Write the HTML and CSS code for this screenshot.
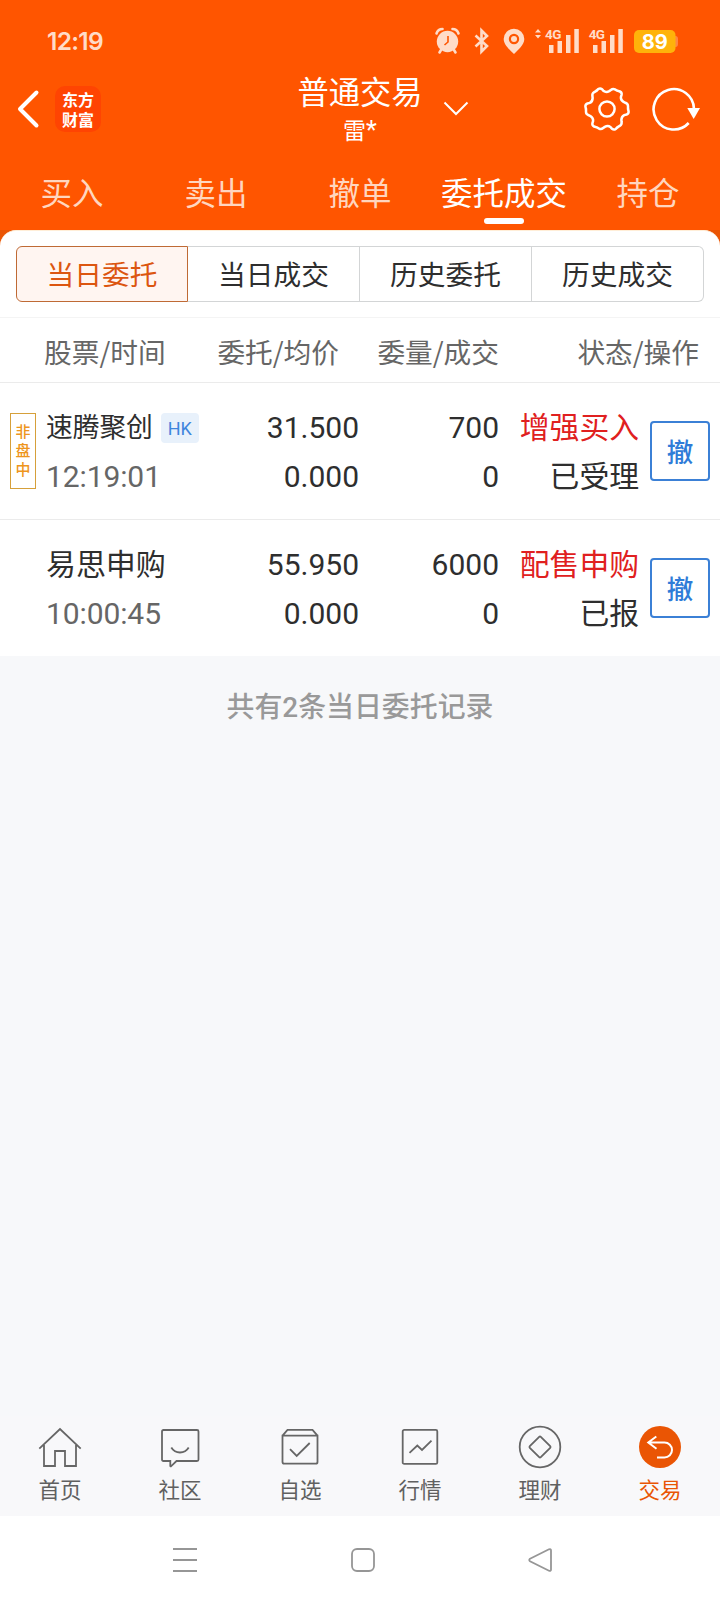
FILE: index.html
```html
<!DOCTYPE html>
<html lang="zh-CN">
<head>
<meta charset="utf-8">
<title>普通交易</title>
<link rel="stylesheet" href="styles.css">
</head>
<body>
<div class="app">
  <header class="header">
    <div class="status">
      <span class="clock">12:19</span>
      <svg class="status-icons" width="250" height="34" viewBox="430 24 250 34" fill="#ffdcc8">
        <circle cx="447.5" cy="41.5" r="10.7"/>
        <path d="M436.5 33.5q1.500-4.500 6-4.500M458.500 33.500q-1.500-4.500-6-4.500M441 50l-1.500 2.500M454 50l1.500 2.500" stroke="#ffdcc8" stroke-width="2.600" fill="none" stroke-linecap="round"/>
        <path d="M448 36v6l-3.500 3" stroke="#ff5500" stroke-width="1.600" fill="none"/>
        <path d="M475.500 35.500l11.500 10.500-5.500 5.500v-21l5.500 5.500-11.500 10.500" stroke="#ffdcc8" stroke-width="2.600" fill="none"/>
        <path fill-rule="evenodd" d="M514 54c-4-4-10.300-9-10.300-15a10.300 10.300 0 0 1 20.600 0c0 6-6.300 11-10.300 15zM514 33.800a5.200 5.200 0 1 0 0 10.400a5.200 5.200 0 1 0 0-10.400z"/>
        <circle cx="514" cy="39" r="3"/>
        <path d="M535 32.500l3-3.500 3 3.500zM535 35l3 3.500 3-3.500z"/>
        <text class="net" x="545" y="38.700">4G</text>
        <path d="M549 45h4.500v8H549zM557.500 41h4.500v12h-4.500zM566 35h4.500v18H566zM574.300 29h4.500v24h-4.500z"/>
        <text class="net" x="588.700" y="38.700">4G</text>
        <path d="M593 45h4.500v8H593zM601.500 41h4.500v12h-4.500zM610 35h4.500v18H610zM618.300 29h4.500v24h-4.500z"/>
        <path d="M674 36h1.500q2.500 0 2.500 3v5q0 3-2.500 3H674z" fill="#ff8642"/>
        <rect x="634" y="30" width="41.500" height="23" rx="5" fill="#ffb30a"/>
        <text class="battery" x="654.800" y="49">89</text>
      </svg>
    </div>
    <div class="titlebar">
      <div class="side">
        <svg width="26" height="40" viewBox="0 0 26 40" fill="none" stroke="#fff" stroke-width="4" stroke-linecap="round" stroke-linejoin="round"><path d="M22.500 3.500L6 20 22.500 36.500"/></svg>
        <div class="logo"><span>东方</span><span>财富</span></div>
      </div>
      <div class="title">
        <div class="title-main">普通交易</div>
        <div class="title-sub">雷<span class="mask">*</span></div>
      </div>
      <div class="side side-right">
        <svg class="caret" width="26" height="16" viewBox="0 0 26 16" fill="none" stroke="#fff" stroke-width="2"><path d="M1.500 1.500L13 13 24.500 1.500"/></svg>
        <svg class="gear" width="48" height="48" viewBox="-24 -24 48 48" fill="none" stroke="#fff" stroke-width="2.500">
          <defs><path id="lobe" d="M21 .3V-3Q20.900-5.300 18.400-6.200L16.600-7Q13.600-8.900 13.900-11.900L14.600-14.200Q15-16.500 12.900-17.500L10.200-18.350"/></defs>
          <use href="#lobe"/><use href="#lobe" transform="rotate(60)"/><use href="#lobe" transform="rotate(120)"/><use href="#lobe" transform="rotate(180)"/><use href="#lobe" transform="rotate(240)"/><use href="#lobe" transform="rotate(300)"/>
          <circle r="7.600"/>
        </svg>
        <svg width="52" height="48" viewBox="650 84 52 48"><path d="M688.700 122A20.200 20.200 0 1 1 694 108" fill="none" stroke="#fff" stroke-width="2.600"/><path d="M687.300 107h12.700l-6.300 11z" fill="#fff"/></svg>
      </div>
    </div>
    <nav class="tabs">
      <span>买入</span><span>卖出</span><span>撤单</span><span class="on">委托成交</span><span>持仓</span>
    </nav>
  </header>

  <div class="backdrop">
  <main class="card">
    <div class="segments">
      <span class="on">当日委托</span><span>当日成交</span><span>历史委托</span><span>历史成交</span>
    </div>
    <div class="grid thead">
      <span class="c-name">股票/时间</span><span class="c-price">委托/均价</span><span class="c-qty">委量/成交</span><span class="c-op">状态/操作</span>
    </div>
    <section class="grid row">
      <div class="flag"><span>非</span><span>盘</span><span>中</span></div>
      <div class="cell name"><div class="small">速腾聚创<i class="tag">HK</i></div><div class="time">12:19:01</div></div>
      <div class="cell num"><div>31.500</div><div>0.000</div></div>
      <div class="cell num"><div>700</div><div>0</div></div>
      <div class="cell state"><div class="red">增强买入</div><div>已受理</div></div>
      <button class="cancel">撤</button>
    </section>
    <section class="grid row last">
      <div></div>
      <div class="cell name"><div>易思申购</div><div class="time">10:00:45</div></div>
      <div class="cell num"><div>55.950</div><div>0.000</div></div>
      <div class="cell num"><div>6000</div><div>0</div></div>
      <div class="cell state"><div class="red">配售申购</div><div>已报</div></div>
      <button class="cancel">撤</button>
    </section>
  </main>
  </div>

  <div class="summary">共有2条当日委托记录</div>

  <nav class="bottom">
    <div class="item"><svg viewBox="0 0 44 44"><path d="M1.300 23.600L22 4 42.700 23.600M6 20v21h11V26h10v15h11V20"/></svg><span>首页</span></div>
    <div class="item"><svg viewBox="0 0 44 44"><path d="M5.500 5h33.500q1.500 0 1.500 1.500V34.500q0 1.500-1.500 1.500H18.500l-5.500 5.300q-.7.300-.7-.6V36H5.500Q4 36 4 34.500V6.500Q4 5 5.500 5zM13.300 22.500q3 5 8.700 5t8.700-5"/></svg><span>社区</span></div>
    <div class="item"><svg viewBox="0 0 44 44"><path d="M4.500 10.700L9.500 4.900h25l5 5.800M4.500 10.700h35v26.300q0 1.700-1.700 1.700H6.200q-1.700 0-1.700-1.700zM12 24.200l6.700 6.800L31.700 18"/></svg><span>自选</span></div>
    <div class="item"><svg viewBox="0 0 44 44"><rect x="4.700" y="4.900" width="34.600" height="34" rx="1.500"/><path d="M11.500 27.800l7.800-7.300 4.700 4.500 9.500-9.300"/></svg><span>行情</span></div>
    <div class="item"><svg viewBox="0 0 44 44"><circle cx="22" cy="22" r="20.300"/><path d="M21.200 11.800q.8-.8 1.600 0l9.400 9.400q.8.800 0 1.600l-9.400 9.400q-.8.800-1.600 0l-9.400-9.400q-.8-.8 0-1.600z"/></svg><span>理财</span></div>
    <div class="item on"><svg viewBox="0 0 44 44"><circle class="disc" cx="22" cy="22" r="21"/><path d="M18.300 11.500l-8 6 8.200 6.300M10.500 17.500H26.500a7.500 7.500 0 0 1 0 15H19"/></svg><span>交易</span></div>
  </nav>

  <footer class="sysnav">
    <svg width="26" height="26" viewBox="0 0 26 26"><path d="M1 2h24M1 13h24M1 24h24"/></svg>
    <svg width="26" height="26" viewBox="0 0 26 26"><rect x="2" y="2" width="22" height="22" rx="5"/></svg>
    <svg width="26" height="26" viewBox="0 0 26 26"><path d="M2 11.800L21 2.300q2-.8 2 1.200v19q0 2-2 1.200L2 14.200q-1.500-1.200 0-2.400z"/></svg>
  </footer>
</div>
</body>
</html>
```

FILE: styles.css
```css
* { box-sizing: border-box; }

body {
  margin: 0;
  background: #fff;
  color: #2e2e2e;
  font-family: Roboto, "Noto Sans CJK SC", sans-serif;
  font-weight: 400;
}

svg { display: block; flex: none; }

.app {
  display: flex;
  flex-direction: column;
  width: 720px;
  height: 1604px;
  background: #f7f8fa;
  overflow: hidden;
}

/* header */
.header {
  flex: none;
  height: 230px;
  background: #ff5500;
  color: #fff;
  font-family: "Noto Sans CJK SC", sans-serif;
}

.status {
  display: flex;
  align-items: center;
  justify-content: space-between;
  height: 70px;
  padding: 12px 40px 0 47px;
}

.clock {
  color: #ffdcc8;
  font: 600 24.5px/34px Inter, sans-serif;
  letter-spacing: -0.7px;
}

.net { font: 700 13.5px Roboto, sans-serif; letter-spacing: -0.6px; }
.battery { font: 700 20px Inter, sans-serif; fill: #fff; text-anchor: middle; }

.titlebar {
  display: grid;
  grid-template-columns: 260px 200px 260px;
  height: 84px;
}

.side { display: flex; align-items: center; padding: 0 0 7px 14px; gap: 15px; }
.side-right { padding: 0 18px 7px 0; gap: 0; justify-content: flex-end; }
.caret { margin-right: auto; margin-left: -17px; }
.gear { margin-right: 19px; }

.logo {
  display: flex;
  flex-direction: column;
  align-items: center;
  justify-content: center;
  width: 46px;
  height: 46px;
  border-radius: 10px;
  background: #ff4402;
  font-size: 16px;
  font-weight: 700;
  line-height: 20px;
}

.title { text-align: center; white-space: nowrap; }
.title-main { font-size: 31.3px; line-height: 41px; }
.title-sub { font-size: 23px; line-height: 36px; }
.mask { font: 25px/30px Roboto, sans-serif; }

.tabs {
  display: grid;
  grid-template-columns: repeat(5, 1fr);
  height: 76px;
  padding-top: 14px;
  color: #ffd6bf;
  font-size: 31.5px;
  line-height: 46px;
  text-align: center;
  white-space: nowrap;
}

.tabs .on { color: #fff; }

.tabs .on::after {
  content: "";
  display: block;
  width: 40px;
  height: 6px;
  margin: 4px auto 0;
  border-radius: 3px;
  background: #fff;
}

/* order list */
.backdrop { flex: none; background: linear-gradient(#ea5504 0 20px, #fff 20px); }

.card {
  border-top: 1px solid #ffeed8;
  border-radius: 16px 16px 0 0;
  background: #fff;
}

.segments {
  display: grid;
  grid-template-columns: 172px 172px 172px 172px;
  height: 87px;
  padding: 15px 16px;
  border-bottom: 1px solid #f4f4f4;
}

.segments span {
  height: 56px;
  padding-top: 1px;
  border: 1px solid #d3d5d6;
  border-left: 0;
  font-size: 27.7px;
  line-height: 55px;
  text-align: center;
}

.segments span:last-child { border-radius: 0 6px 6px 0; }

.segments .on {
  border: 1px solid #bf6a35;
  border-radius: 6px 0 0 6px;
  background: #fff5f1;
  color: #dc5510;
}

.grid {
  display: grid;
  grid-template-columns: 46px 193px 120px 140px 140px 71px;
  border-bottom: 1px solid #ebebeb;
}

.thead {
  grid-template-columns: 44px 195px 100px 160px 200px;
  height: 65px;
  color: #666;
  font-family: "Noto Sans CJK SC", sans-serif;
  font-size: 27.7px;
  line-height: 67px;
  white-space: nowrap;
}

.thead span { display: flex; justify-content: flex-end; }
.thead .c-name { grid-column: 2; justify-content: flex-start; }

.row { height: 137px; font-size: 30px; }
.row.last { height: 136px; border-bottom: 0; }

.cell { padding-top: 20px; line-height: 49px; text-align: right; white-space: nowrap; }
.cell > div { height: 49px; }
.name { text-align: left; }
.name > div { letter-spacing: -0.1px; }
.small { display: flex; align-items: center; padding-top: 1px; font-size: 26.8px; }
.time { color: #666; }
.state { font-size: 29.8px; }
.red { color: #e02020; }

.tag {
  width: 38px;
  height: 30px;
  margin-left: 8px;
  border-radius: 4px;
  background: #e8f1fb;
  color: #3f85dd;
  font: 18px/31px Roboto, sans-serif;
  text-align: center;
}

.flag {
  display: flex;
  flex-direction: column;
  align-items: center;
  justify-content: center;
  width: 26px;
  height: 76px;
  margin: 30px 0 0 10px;
  border: 1px solid #d6a03a;
  color: #ee951c;
  font-size: 15px;
  font-weight: 500;
  line-height: 19px;
}

.cancel {
  width: 60px;
  height: 60px;
  margin: 38px 0 0 11px;
  padding: 0;
  border: 2px solid #3b80d6;
  border-radius: 4px;
  background: #fff;
  color: #2f7cd8;
  font: 500 26.5px/56px "Noto Sans CJK SC", sans-serif;
}

.summary {
  flex: 1;
  padding-top: 31px;
  color: #999;
  font-size: 27.9px;
  font-weight: 500;
  line-height: 42px;
  text-align: center;
}

/* bottom navigation */
.bottom {
  display: grid;
  grid-template-columns: repeat(6, 1fr);
  flex: none;
  height: 100px;
  padding-top: 9px;
  background: #f8f8fa;
}

.item { display: flex; flex-direction: column; align-items: center; color: #606060; font-size: 21.5px; line-height: 30px; gap: 7px; }

.item svg {
  width: 44px;
  height: 44px;
  fill: none;
  stroke: #666;
  stroke-width: 1.8;
}

.item.on { color: #e95504; }
.item.on svg { stroke: #fff; stroke-width: 2; }
.item .disc { fill: #ea5504; stroke: none; }

.sysnav {
  display: flex;
  flex: none;
  align-items: center;
  height: 88px;
  padding-left: 172px;
  gap: 152px;
  background: #fff;
}

.sysnav svg { fill: none; stroke: #969696; stroke-width: 1.8; }
```
